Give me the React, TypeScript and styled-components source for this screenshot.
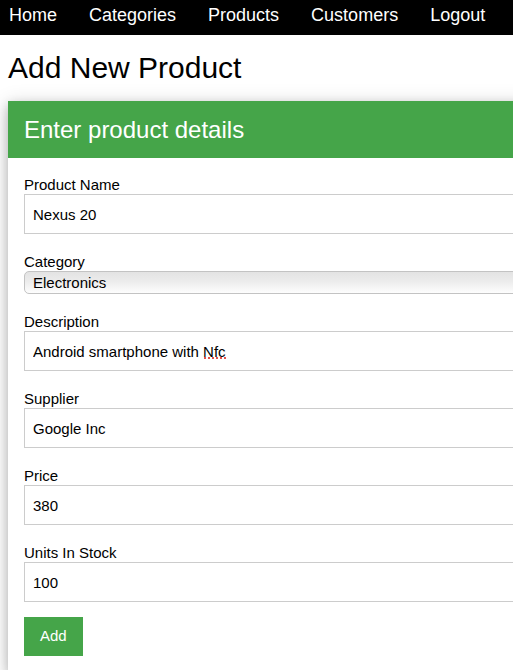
import React from "react";
import styled, { createGlobalStyle } from "styled-components";

const GlobalStyle = createGlobalStyle`
  html, body {
    margin: 0;
    padding: 0;
    background: #ffffff;
    overflow: hidden;
  }
  body {
    font-family: "Liberation Sans", Arial, Helvetica, sans-serif;
    color: #000000;
  }
  * { box-sizing: border-box; }
`;

const NavBar = styled.nav`
  display: flex;
  gap: 32px;
  height: 35px;
  padding-left: 9px;
  background: #000000;
`;

const NavLink = styled.a`
  color: #ffffff;
  font-size: 18px;
  line-height: 21px;
  padding-top: 5px;
  text-decoration: none;
  white-space: nowrap;
`;

const Main = styled.main`
  padding: 0 8px;
`;

const Title = styled.h2`
  margin: 10px 0 11px;
  font-size: 30px;
  font-weight: 400;
  line-height: 45px;
`;

const Card = styled.section`
  width: 640px;
  background: #ffffff;
  box-shadow: 0 4px 10px 0 rgba(0, 0, 0, 0.2), 0 4px 20px 0 rgba(0, 0, 0, 0.19);
`;

const CardHeader = styled.header`
  background: #45a549;
  padding: 10px 16px;
`;

const CardTitle = styled.h3`
  margin: 0;
  color: #ffffff;
  font-size: 24px;
  font-weight: 400;
  line-height: 37px;
`;

const Form = styled.form`
  padding: 17px 16px 16px;
`;

const Fields = styled.div`
  display: flex;
  flex-direction: column;
  gap: 18px;
`;

const Field = styled.div`
  display: flex;
  flex-direction: column;
`;

const Label = styled.label`
  font-size: 15px;
  line-height: 19px;
  color: #000000;
`;

const InputWrap = styled.div`
  position: relative;
`;

const TextInput = styled.input`
  display: block;
  width: 100%;
  height: 40px;
  margin: 0;
  padding: 0 8px;
  border: 1px solid #cccccc;
  border-radius: 0;
  background: #ffffff;
  font-family: "Liberation Sans", Arial, Helvetica, sans-serif;
  font-size: 15px;
  color: #000000;
  outline: none;
`;

const Select = styled.select`
  display: block;
  width: 100%;
  height: 23px;
  margin: 0;
  padding: 0 8px;
  border: 1px solid #c3c3c3;
  border-radius: 5px;
  background: linear-gradient(to bottom, #e3e3e3 0%, #ececec 45%, #fdfdfd 100%);
  font-family: "Liberation Sans", Arial, Helvetica, sans-serif;
  font-size: 15px;
  color: #000000;
  appearance: none;
  -webkit-appearance: none;
  outline: none;
`;

const SpellMark = styled.span<{ $left: number; $width: number }>`
  position: absolute;
  left: ${(p) => p.$left}px;
  top: 26px;
  width: ${(p) => p.$width}px;
  height: 0;
  border-bottom: 2px dotted #e2504a;
  pointer-events: none;
`;

const AddButton = styled.button`
  display: block;
  margin-top: 15px;
  padding: 8px 16px;
  border: none;
  background: #45a549;
  color: #ffffff;
  font-family: "Liberation Sans", Arial, Helvetica, sans-serif;
  font-size: 15px;
  line-height: 22.5px;
  cursor: pointer;
`;

type FieldDef = { label: string; value: string; id: string };

const before: FieldDef[] = [{ id: "name", label: "Product Name", value: "Nexus 20" }];
const after: FieldDef[] = [
  { id: "supplier", label: "Supplier", value: "Google Inc" },
  { id: "price", label: "Price", value: "380" },
  { id: "stock", label: "Units In Stock", value: "100" },
];

export default function App() {
  return (
    <>
      <GlobalStyle />
      <NavBar>
        {["Home", "Categories", "Products", "Customers", "Logout"].map((item) => (
          <NavLink key={item} href="#">
            {item}
          </NavLink>
        ))}
      </NavBar>
      <Main>
        <Title>Add New Product</Title>
        <Card>
          <CardHeader>
            <CardTitle>Enter product details</CardTitle>
          </CardHeader>
          <Form onSubmit={(e) => e.preventDefault()}>
            <Fields>
              {before.map((f) => (
                <Field key={f.id}>
                  <Label htmlFor={f.id}>{f.label}</Label>
                  <TextInput id={f.id} defaultValue={f.value} />
                </Field>
              ))}
              <Field>
                <Label htmlFor="category">Category</Label>
                <Select id="category" defaultValue="Electronics">
                  <option>Electronics</option>
                  <option>Books</option>
                  <option>Clothing</option>
                </Select>
              </Field>
              <Field>
                <Label htmlFor="description">Description</Label>
                <InputWrap>
                  <TextInput id="description" defaultValue="Android smartphone with Nfc" spellCheck={false} />
                  <SpellMark $left={180} $width={22} />
                </InputWrap>
              </Field>
              {after.map((f) => (
                <Field key={f.id}>
                  <Label htmlFor={f.id}>{f.label}</Label>
                  <TextInput id={f.id} defaultValue={f.value} />
                </Field>
              ))}
            </Fields>
            <AddButton type="submit">Add</AddButton>
          </Form>
        </Card>
      </Main>
    </>
  );
}
